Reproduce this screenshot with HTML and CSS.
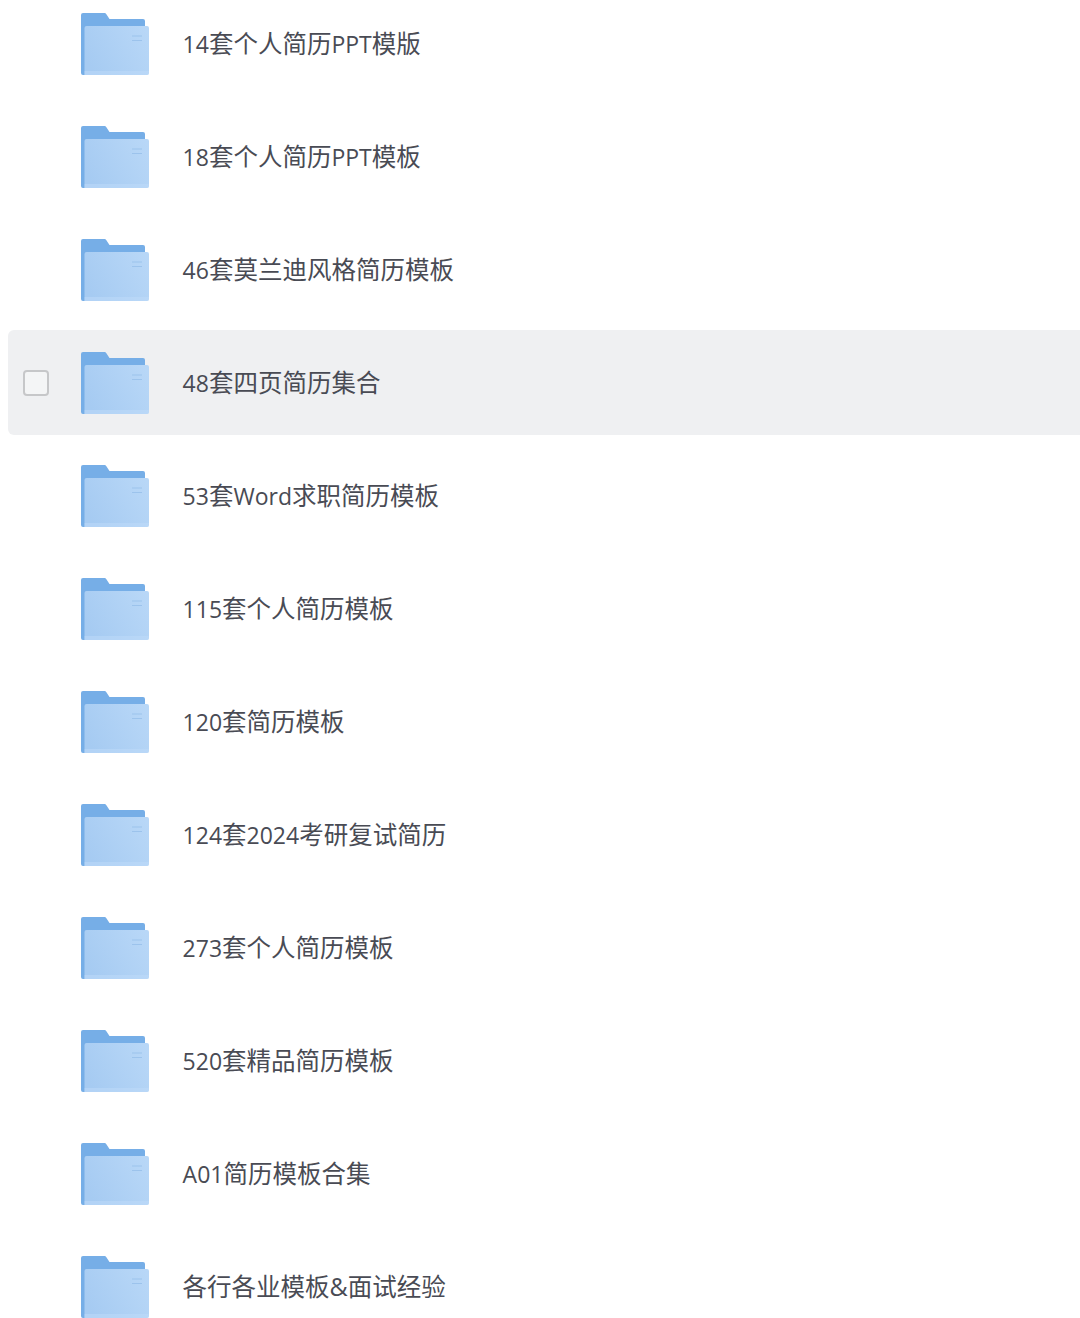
FILE: index.html
```html
<!DOCTYPE html>
<html lang="zh-CN">
<head>
<meta charset="utf-8">
<title>简历模板</title>
<link rel="stylesheet" href="styles.css">
</head>
<body>
<svg class="defs" width="0" height="0" aria-hidden="true">
  <defs>
    <linearGradient id="front" x1="0" y1="0.6" x2="1" y2="0.2">
      <stop offset="0" stop-color="#a6cbf2"/>
      <stop offset="1" stop-color="#b8d7f7"/>
    </linearGradient>
    <symbol id="folder" viewBox="0 0 68 62">
      <path d="M0 2a2 2 0 0 1 2-2h21.500a2 2 0 0 1 1.700 .9l3.300 5.100h33.500a2 2 0 0 1 2 2V14H4V62H2a2 2 0 0 1-2-2z" fill="#76aee7"/>
      <path d="M3.500 62V15a2 2 0 0 1 2-2H66a2 2 0 0 1 2 2v45a2 2 0 0 1-2 2z" fill="url(#front)"/>
      <path d="M3.500 58H68V60a2 2 0 0 1-2 2H3.500z" fill="#bfdcfa" opacity=".5"/>
      <path d="M51 23h10M51 27.500h10" stroke="#9cc3ec" stroke-width="1.200" fill="none"/>
    </symbol>
  </defs>
</svg>
<ul class="list">
  <li class="row"><span class="check"></span><svg class="folder"><use href="#folder"/></svg><span class="name"><span class="latin">14</span>套个人简历<span class="latin">PPT</span>模版</span></li>
  <li class="row"><span class="check"></span><svg class="folder"><use href="#folder"/></svg><span class="name"><span class="latin">18</span>套个人简历<span class="latin">PPT</span>模板</span></li>
  <li class="row"><span class="check"></span><svg class="folder"><use href="#folder"/></svg><span class="name"><span class="latin">46</span>套莫兰迪风格简历模板</span></li>
  <li class="row row-active"><span class="check"></span><svg class="folder"><use href="#folder"/></svg><span class="name"><span class="latin">48</span>套四页简历集合</span></li>
  <li class="row"><span class="check"></span><svg class="folder"><use href="#folder"/></svg><span class="name"><span class="latin">53</span>套<span class="latin">Word</span>求职简历模板</span></li>
  <li class="row"><span class="check"></span><svg class="folder"><use href="#folder"/></svg><span class="name"><span class="latin">115</span>套个人简历模板</span></li>
  <li class="row"><span class="check"></span><svg class="folder"><use href="#folder"/></svg><span class="name"><span class="latin">120</span>套简历模板</span></li>
  <li class="row"><span class="check"></span><svg class="folder"><use href="#folder"/></svg><span class="name"><span class="latin">124</span>套<span class="latin">2024</span>考研复试简历</span></li>
  <li class="row"><span class="check"></span><svg class="folder"><use href="#folder"/></svg><span class="name"><span class="latin">273</span>套个人简历模板</span></li>
  <li class="row"><span class="check"></span><svg class="folder"><use href="#folder"/></svg><span class="name"><span class="latin">520</span>套精品简历模板</span></li>
  <li class="row"><span class="check"></span><svg class="folder"><use href="#folder"/></svg><span class="name"><span class="latin">A01</span>简历模板合集</span></li>
  <li class="row"><span class="check"></span><svg class="folder"><use href="#folder"/></svg><span class="name">各行各业模板<span class="latin amp">&amp;</span>面试经验</span></li>
</ul>
</body>
</html>
```

FILE: styles.css
```css
html, body {
  margin: 0;
  padding: 0;
  height: 1318px;
  overflow: hidden;
  background: #fff;
}
.defs {
  display: block;
  height: 0;
}
.list {
  list-style: none;
  margin: -9px 0 0;
  padding: 0 0 0 8px;
  display: flex;
  flex-direction: column;
  gap: 8px;
}
.row {
  height: 105px;
  flex: none;
  display: flex;
  align-items: center;
  padding-left: 15px;
  border-radius: 6px 0 0 6px;
}
.row-active {
  background: #eff0f2;
}
.check {
  width: 22px;
  height: 22px;
  flex: none;
  border: 2px solid transparent;
  border-radius: 4px;
  margin-right: 32px;
}
.row-active .check {
  border-color: #c6c7c9;
  background: #f4f5f6;
}
.folder {
  width: 68px;
  height: 62px;
  flex: none;
  margin-right: 33.6px;
}
.name {
  font-family: "Noto Sans CJK SC", sans-serif;
  font-size: 24.5px;
  line-height: 32px;
  margin-top: -1px;
  color: #494b54;
}
.latin {
  font-family: "Open Sans", sans-serif;
  font-size: 23px;
}
.amp {
  font-size: 25px;
}
```
